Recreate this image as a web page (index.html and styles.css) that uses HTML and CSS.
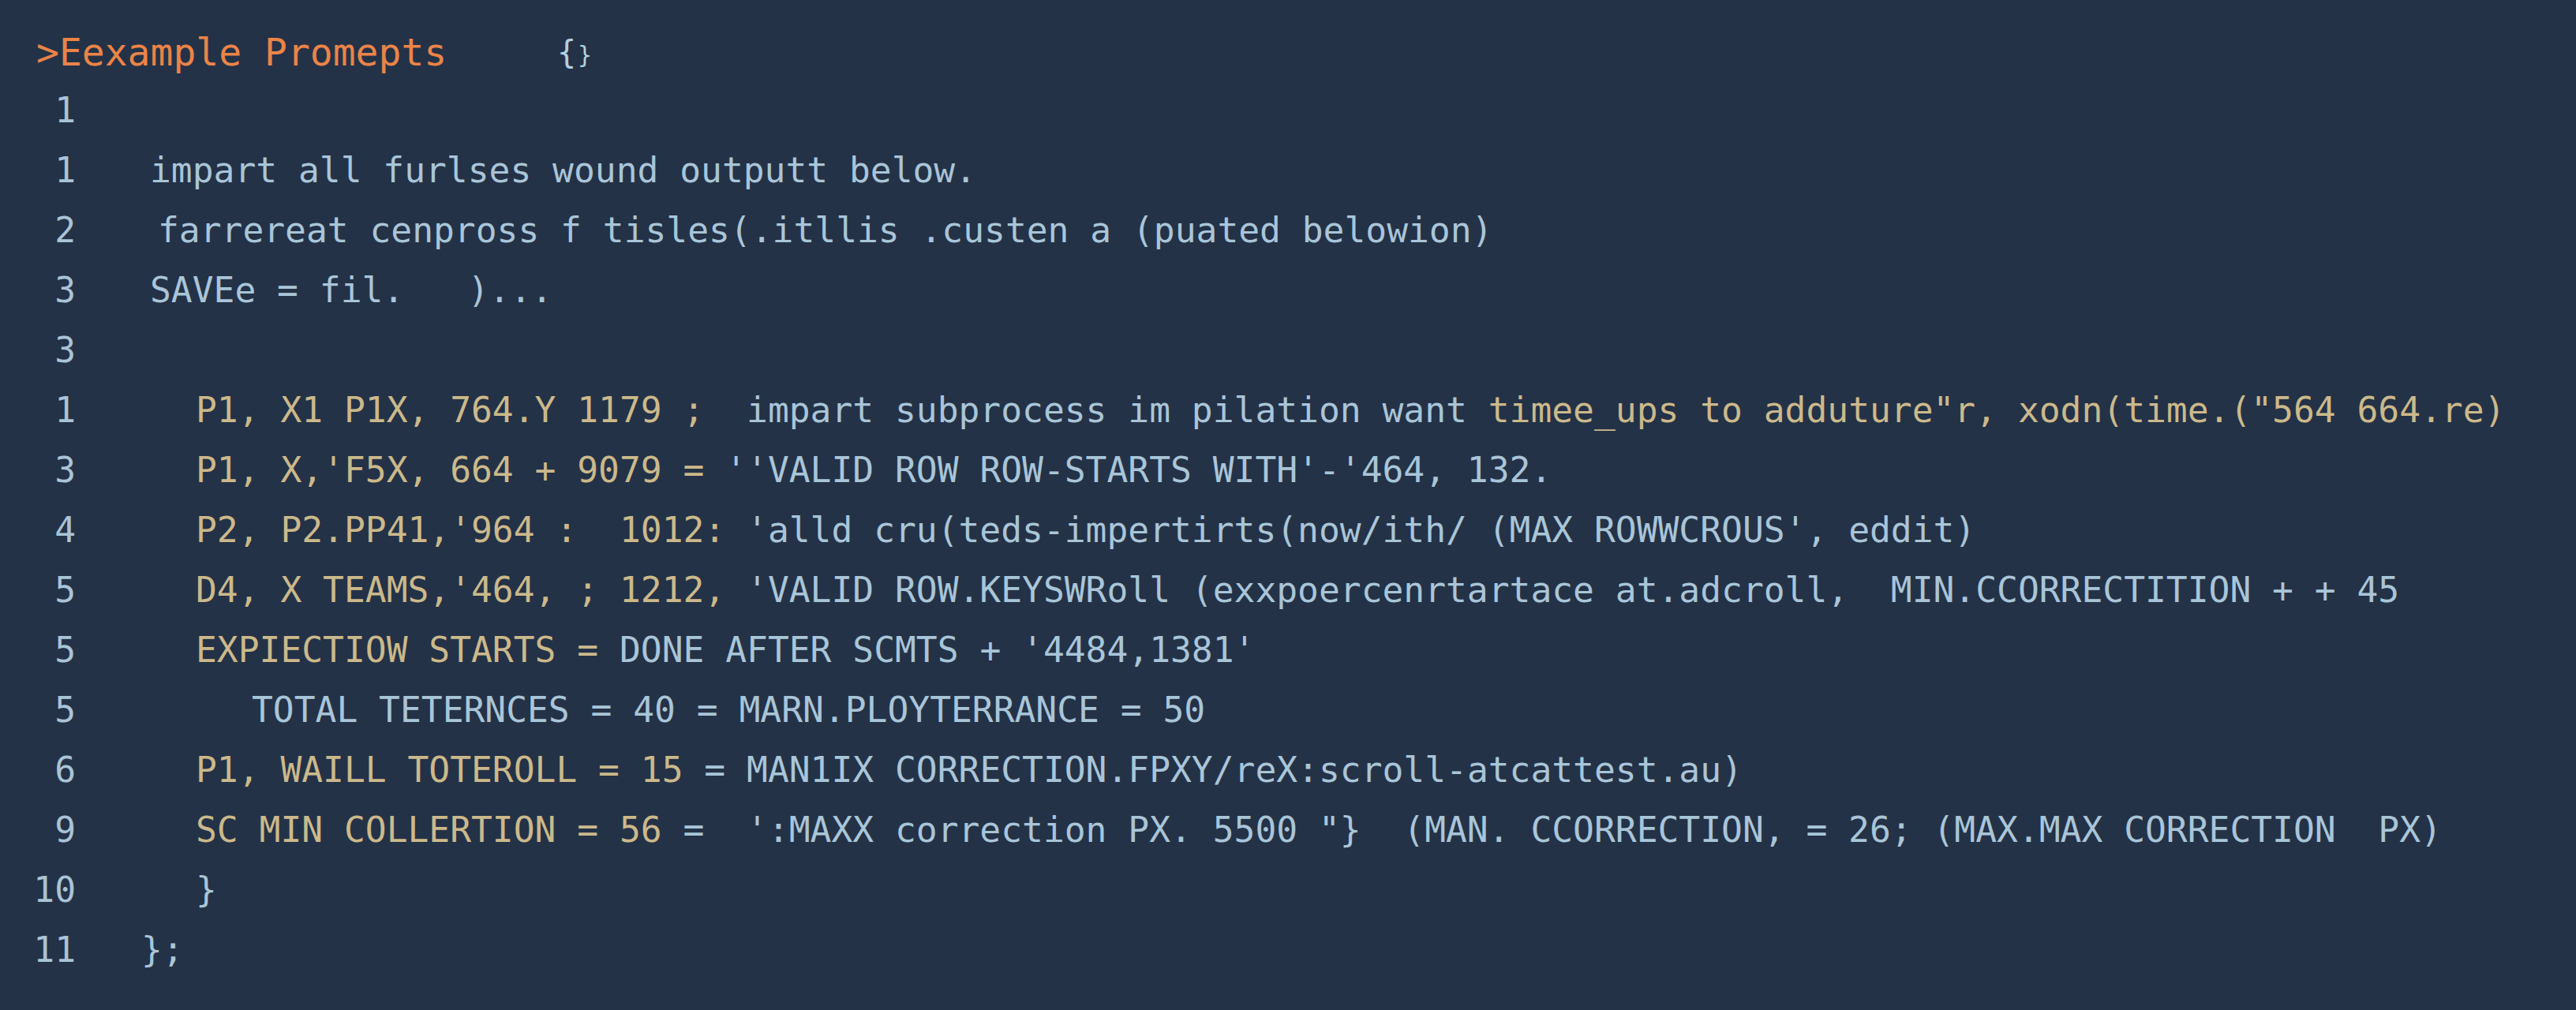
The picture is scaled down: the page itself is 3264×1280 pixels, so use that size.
FILE: index.html
```html
<!DOCTYPE html>
<html lang="en">
<head>
<meta charset="utf-8">
<title>Example Prompts</title>
<link rel="stylesheet" href="styles.css">
</head>
<body>
<main class="editor">
  <header class="head">
    <span class="title">&gt;Eexample Promepts</span>
    <span class="braces">{<span class="half">}</span></span>
  </header>
  <section class="code">
    <div class="row"><span class="ln">1</span><span class="src"></span></div>
    <div class="row"><span class="ln">1</span><span class="src t">impart all furlses wound outputt below.</span></div>
    <div class="row"><span class="ln">2</span><span class="src t2">farrereat cenpross f tisles(.itllis .custen a (puated belowion)</span></div>
    <div class="row"><span class="ln">3</span><span class="src t">SAVEe = fil.   )...</span></div>
    <div class="row"><span class="ln">3</span><span class="src"></span></div>
    <div class="row"><span class="ln">1</span><span class="src b"><span class="y">P1, X1 P1X, 764.Y 1179 ;  </span>impart subprocess im pilation want <span class="y">timee_ups to adduture"r, xodn(time.("564 664.re)</span></span></div>
    <div class="row"><span class="ln">3</span><span class="src b"><span class="y">P1, X,'F5X, 664 + 9079 = </span>''VALID ROW ROW-STARTS WITH'-'464, 132.</span></div>
    <div class="row"><span class="ln">4</span><span class="src b"><span class="y">P2, P2.PP41,'964 :  1012: </span>'alld cru(teds-impertirts(now/ith/ (MAX ROWWCROUS', eddit)</span></div>
    <div class="row"><span class="ln">5</span><span class="src b"><span class="y">D4, X TEAMS,'464, ; 1212, </span>'VALID ROW.KEYSWRoll (exxpoercenrtartace at.adcroll,  MIN.CCORRECTITION + + 45</span></div>
    <div class="row"><span class="ln">5</span><span class="src b"><span class="y">EXPIECTIOW STARTS = </span>DONE AFTER SCMTS + '4484,1381'</span></div>
    <div class="row"><span class="ln">5</span><span class="src c">TOTAL TETERNCES = 40 = MARN.PLOYTERRANCE = 50</span></div>
    <div class="row"><span class="ln">6</span><span class="src b"><span class="y">P1, WAILL TOTEROLL = 15 </span>= MAN1IX CORRECTION.FPXY/reX:scroll-atcattest.au)</span></div>
    <div class="row"><span class="ln">9</span><span class="src b"><span class="y">SC MIN COLLERTION = 56 </span>=  ':MAXX correction PX. 5500 "}  (MAN. CCORRECTION, = 26; (MAX.MAX CORRECTION  PX)</span></div>
    <div class="row"><span class="ln">10</span><span class="src b">}</span></div>
    <div class="row"><span class="ln">11</span><span class="src">};</span></div>
  </section>
</main>
</body>
</html>
```

FILE: styles.css
```css
html, body {
  margin: 0;
  padding: 0;
  background: #243247;
}

body {
  width: 3264px;
  height: 1280px;
  overflow: hidden;
  font-family: "DejaVu Sans Mono", "Liberation Mono", monospace;
  color: #a9c5d8;
}

.editor {
  padding: 30px 0 0 0;
}

.head {
  display: flex;
  align-items: center;
  height: 72px;
  padding-left: 46px;
}

.title {
  font-size: 48px;
  color: #ea8448;
  white-space: pre;
  width: 660px;
}

.braces {
  font-size: 40px;
  color: #b3cfe0;
  letter-spacing: 2px;
}

.braces .half {
  font-size: 30px;
}

.code {
  display: flex;
  flex-direction: column;
}

.row {
  display: flex;
  height: 76px;
  align-items: center;
  font-size: 44.6px;
  white-space: pre;
}

.ln {
  width: 96px;
  text-align: right;
  color: #a9c4d6;
  flex: none;
}

.src {
  padding-left: 83px;
  color: #a9c5d8;
}

.src.t { padding-left: 94px; }
.src.t2 { padding-left: 104px; }
.src.b { padding-left: 152px; }
.src.c { padding-left: 223px; }

.y {
  color: #cbb98b;
}
```
